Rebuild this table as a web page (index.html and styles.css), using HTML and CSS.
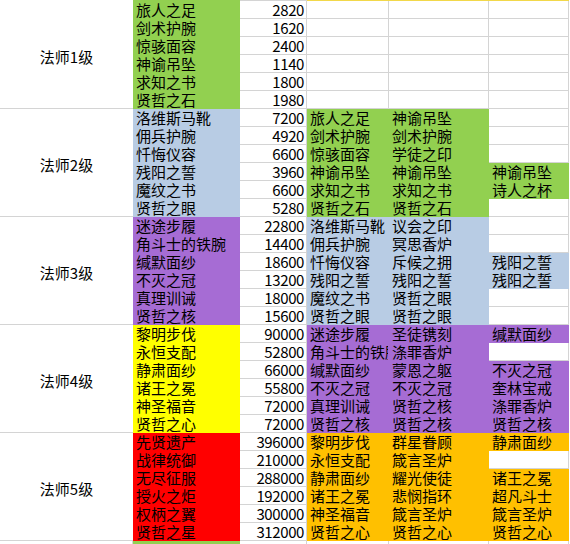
FILE: index.html
```html
<!DOCTYPE html>
<html lang="zh-CN">
<head>
<meta charset="utf-8">
<title>法师装备</title>
<link rel="stylesheet" href="styles.css">
</head>
<body>
<div class="sheet">
  <div class="s"></div><div class="s gr"></div><div class="s gy"></div><div class="s yl"></div><div class="s yl"></div><div class="s yl"></div><div class="s"></div>

  <div class="c lab">法师1级</div>
  <div class="c gr">旅人之足</div><div class="c num">2820</div><div class="c"></div><div class="c"></div><div class="c"></div><div class="g"></div>
  <div class="c gr">剑术护腕</div><div class="c num">1620</div><div class="c"></div><div class="c"></div><div class="c"></div><div class="g"></div>
  <div class="c gr">惊骇面容</div><div class="c num">2400</div><div class="c"></div><div class="c"></div><div class="c"></div><div class="g"></div>
  <div class="c gr">神谕吊坠</div><div class="c num">1140</div><div class="c"></div><div class="c"></div><div class="c"></div><div class="g"></div>
  <div class="c gr">求知之书</div><div class="c num">1800</div><div class="c"></div><div class="c"></div><div class="c"></div><div class="g"></div>
  <div class="c gr">贤哲之石</div><div class="c num">1980</div><div class="c"></div><div class="c"></div><div class="c"></div><div class="g"></div>

  <div class="c lab">法师2级</div>
  <div class="c bl">洛维斯马靴</div><div class="c num">7200</div><div class="c gr">旅人之足</div><div class="c gr">神谕吊坠</div><div class="c"></div><div class="g"></div>
  <div class="c bl">佣兵护腕</div><div class="c num">4920</div><div class="c gr">剑术护腕</div><div class="c gr">剑术护腕</div><div class="c"></div><div class="g"></div>
  <div class="c bl">忏悔仪容</div><div class="c num">6600</div><div class="c gr">惊骇面容</div><div class="c gr">学徒之印</div><div class="c"></div><div class="g"></div>
  <div class="c bl">残阳之誓</div><div class="c num">3960</div><div class="c gr">神谕吊坠</div><div class="c gr">神谕吊坠</div><div class="c gr">神谕吊坠</div><div class="g"></div>
  <div class="c bl">魔纹之书</div><div class="c num">6600</div><div class="c gr">求知之书</div><div class="c gr">求知之书</div><div class="c gr">诗人之杯</div><div class="g"></div>
  <div class="c bl">贤哲之眼</div><div class="c num">5280</div><div class="c gr">贤哲之石</div><div class="c gr">贤哲之石</div><div class="c"></div><div class="g"></div>

  <div class="c lab">法师3级</div>
  <div class="c pu">迷途步履</div><div class="c num">22800</div><div class="c bl">洛维斯马靴</div><div class="c bl">议会之印</div><div class="c"></div><div class="g"></div>
  <div class="c pu">角斗士的铁腕</div><div class="c num">14400</div><div class="c bl">佣兵护腕</div><div class="c bl">冥思香炉</div><div class="c"></div><div class="g"></div>
  <div class="c pu">缄默面纱</div><div class="c num">18600</div><div class="c bl">忏悔仪容</div><div class="c bl">斥候之拥</div><div class="c bl">残阳之誓</div><div class="g"></div>
  <div class="c pu">不灭之冠</div><div class="c num">13200</div><div class="c bl">残阳之誓</div><div class="c bl">残阳之誓</div><div class="c bl">残阳之誓</div><div class="g"></div>
  <div class="c pu">真理训诫</div><div class="c num">18000</div><div class="c bl">魔纹之书</div><div class="c bl">贤哲之眼</div><div class="c"></div><div class="g"></div>
  <div class="c pu">贤哲之核</div><div class="c num">15600</div><div class="c bl">贤哲之眼</div><div class="c bl">贤哲之眼</div><div class="c"></div><div class="g"></div>

  <div class="c lab">法师4级</div>
  <div class="c ye">黎明步伐</div><div class="c num">90000</div><div class="c pu">迷途步履</div><div class="c pu">圣徒镌刻</div><div class="c pu">缄默面纱</div><div class="g"></div>
  <div class="c ye">永恒支配</div><div class="c num">52800</div><div class="c pu clip">角斗士的铁腕</div><div class="c pu">涤罪香炉</div><div class="c"></div><div class="g"></div>
  <div class="c ye">静肃面纱</div><div class="c num">66000</div><div class="c pu">缄默面纱</div><div class="c pu">蒙恩之躯</div><div class="c pu">不灭之冠</div><div class="g"></div>
  <div class="c ye">诸王之冕</div><div class="c num">55800</div><div class="c pu">不灭之冠</div><div class="c pu">不灭之冠</div><div class="c pu">奎林宝戒</div><div class="g"></div>
  <div class="c ye">神圣福音</div><div class="c num">72000</div><div class="c pu">真理训诫</div><div class="c pu">贤哲之核</div><div class="c pu">涤罪香炉</div><div class="g"></div>
  <div class="c ye">贤哲之心</div><div class="c num">72000</div><div class="c pu">贤哲之核</div><div class="c pu">贤哲之核</div><div class="c pu">贤哲之核</div><div class="g"></div>

  <div class="c lab">法师5级</div>
  <div class="c rd">先贤遗产</div><div class="c num">396000</div><div class="c or">黎明步伐</div><div class="c or">群星眷顾</div><div class="c or">静肃面纱</div><div class="g"></div>
  <div class="c rd">战律统御</div><div class="c num">210000</div><div class="c or">永恒支配</div><div class="c or">箴言圣炉</div><div class="c"></div><div class="g"></div>
  <div class="c rd">无尽征服</div><div class="c num">288000</div><div class="c or">静肃面纱</div><div class="c or">耀光使徒</div><div class="c or">诸王之冕</div><div class="g"></div>
  <div class="c rd">授火之炬</div><div class="c num">192000</div><div class="c or">诸王之冕</div><div class="c or">悲悯指环</div><div class="c or">超凡斗士</div><div class="g"></div>
  <div class="c rd">权柄之翼</div><div class="c num">300000</div><div class="c or">神圣福音</div><div class="c or">箴言圣炉</div><div class="c or">箴言圣炉</div><div class="g"></div>
  <div class="c rd">贤哲之星</div><div class="c num">312000</div><div class="c or">贤哲之心</div><div class="c or">贤哲之心</div><div class="c or">贤哲之心</div><div class="g"></div>

  <div class="c"></div><div class="c gr"></div><div class="c"></div><div class="c"></div><div class="c"></div><div class="c"></div><div class="g"></div>
</div>
</body>
</html>
```

FILE: styles.css
```css
html, body {
  margin: 0;
  padding: 0;
  background: #ffffff;
}

body {
  font-family: "Noto Sans CJK SC", "Noto Sans", sans-serif;
  font-size: 15px;
  color: #000000;
}

.sheet {
  display: grid;
  grid-template-columns: 133px 107px 67px 82px 100px 80px 1fr;
  grid-template-rows: 1px repeat(30, 18px) 4px;
  width: 570px;
  height: 544px;
  overflow: hidden;
}

.s {
  background: #ffffff;
}

.s.gy {
  background: #d4d4d4;
}

.c {
  box-sizing: border-box;
  border-right: 1px solid #d4d4d4;
  border-bottom: 1px solid #d4d4d4;
  line-height: 17px;
  padding: 0 3px;
  white-space: nowrap;
}

.clip {
  overflow: hidden;
}

.g {
  background: #ffffff;
}

.lab {
  grid-row: span 6;
  display: flex;
  align-items: center;
  justify-content: center;
  padding-top: 4px;
  border-right: none;
}

.num {
  text-align: right;
  padding-right: 2px;
  letter-spacing: -0.4px;
}

.gr {
  background: #92d050;
  border-color: transparent;
}

.bl {
  background: #b8cce4;
  border-color: transparent;
}

.pu {
  background: #a66cd4;
  border-color: transparent;
}

.ye {
  background: #ffff00;
  border-color: transparent;
}

.rd {
  background: #ff0000;
  border-color: transparent;
}

.or {
  background: #ffc000;
  border-color: transparent;
}

.yl {
  background: #f2d84a;
}
```
